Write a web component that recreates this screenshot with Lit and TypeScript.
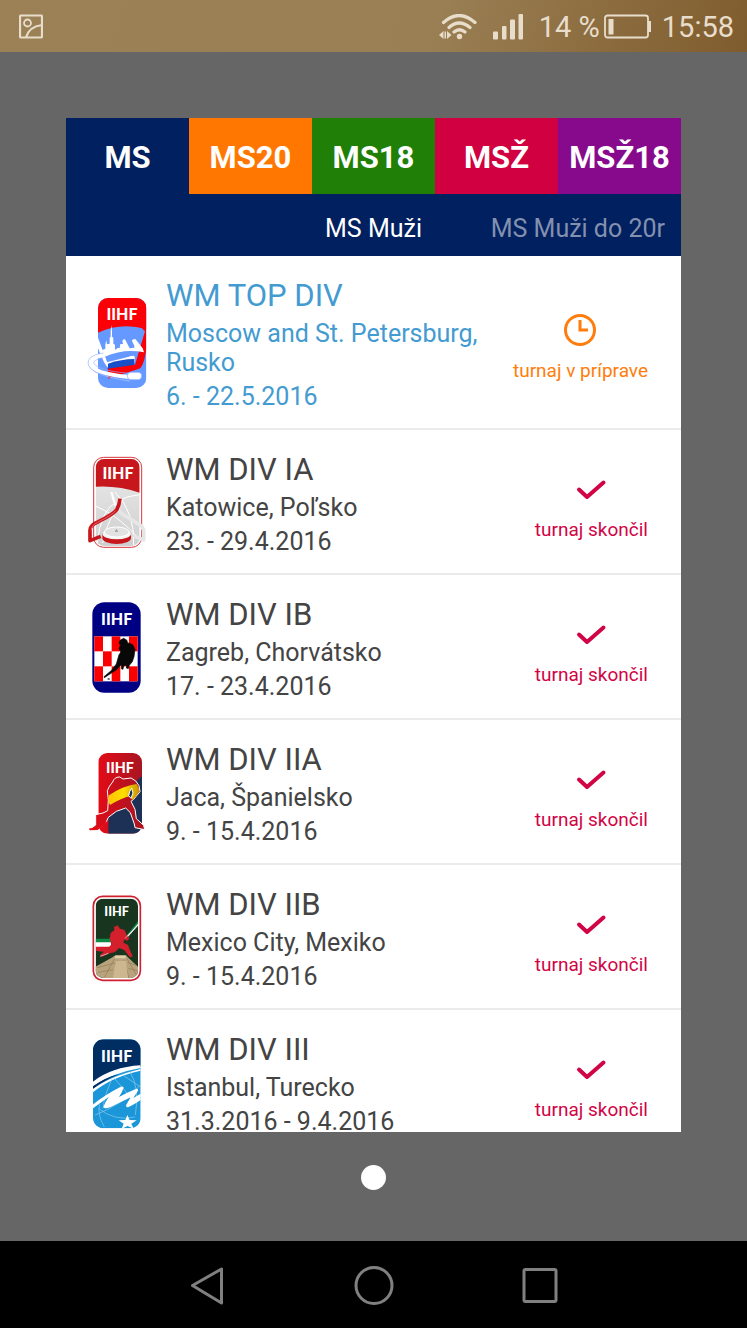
import { LitElement, html, css, svg, TemplateResult } from "lit";
import { customElement, property, state } from "lit/decorators.js";
import { classMap } from "lit/directives/class-map.js";

type Status = "upcoming" | "finished";

interface Tournament {
  name: string;
  place: string;
  dates: string;
  status: Status;
  logo: TemplateResult;
}

const wordmark = (x: number, y: number, size: number) => svg`
  <text x=${x} y=${y} font-size=${size} font-family="Lato, sans-serif" font-weight="900"
    fill="#fff" text-anchor="middle">IIHF</text>`;

const logoTop = html`
  <svg viewBox="0 24 270 300" aria-hidden="true">
    <defs><clipPath id="c"><rect x="69" y="39" width="145" height="270" rx="30" /></clipPath></defs>
    <g clip-path="url(#c)">
      <rect x="69" y="39" width="145" height="270" fill="#6699ff" />
      <path d="M69 39h145v94Q140 110 69 143z" fill="#fb0007" />
      <path d="M214 150V39h-8l-4 92 8 8-30 100-80 32v10l92-30q14-4 22-60z" fill="#fb0007" />
      <path d="M82 195l9-4v-12l3-13 2 12 8-2v-18l3-3v-17l2-18 2 18v17l4 3v18l5 3v16l8-6h6l2-12h8l-2-10q2-6 8-4l14 27 14-2v-6l-7-14q0-6 10-6l22 28 4 12q-60-12-118 13z" fill="#fff" />
      <path d="M69 158l27 72q3 8 12 5l59-21q11-4 12 4l-74 19-4 14Q88 240 69 190z" fill="#fff" />
    </g>
    <path d="M96 232l78-20q6-1 5 8v12l-79 20z" fill="#fff" />
    <path d="M99 236q40-14 79-14v20l-80 13z" fill="#174fc9" />
    <path d="M98 251l82-12q4 12-10 16l-70 17z" fill="#fb0007" />
    <path d="M84 205q-42 6-44 29 4 37 124 54" fill="none" stroke="#8fb3ff" stroke-width="4" />
    <path d="M84 211q-37 6-38 23 5 32 118 42" fill="none" stroke="#fff" stroke-width="12" />
    <path d="M84 219q-29 5-28 16 12 22 104 30" fill="none" stroke="#8fb3ff" stroke-width="2" />
    <rect x="157" y="262" width="43" height="22" rx="11" fill="#fff" stroke="#84adff" stroke-width="2" />
    ${wordmark(141, 106, 48)}
  </svg>`;

const logoIA = html`
  <svg viewBox="0 22 270 300" aria-hidden="true">
    <defs>
      <clipPath id="c"><rect x="62" y="43" width="132" height="261" rx="25" /></clipPath>
      <linearGradient id="g" x1="0" y1="0" x2="0" y2="1">
        <stop offset="0" stop-color="#ececec" /><stop offset="1" stop-color="#cfcfcf" />
      </linearGradient>
    </defs>
    <rect x="56" y="38" width="144" height="270" rx="30" fill="#fff" stroke="#d8373e" stroke-width="3" />
    <g clip-path="url(#c)">
      <rect x="62" y="43" width="132" height="261" fill="url(#g)" />
      <path d="M62 43h132v101Q130 122 62 126z" fill="#c8161d" />
      <path d="M194 150q-80 8-105 60-20 40-22 85M62 184q70 30 132 100M120 142q60 60 56 160M145 165q-50 60-62 130" fill="none" stroke="#fff" stroke-width="3" />
    </g>
    <path d="M109 142q14 50 30 64l48 30q19 10 19 24v26l-32-13" fill="none" stroke="#e6e6e6" stroke-width="11" stroke-linejoin="round" />
    <path d="M109 142q8 28 12 40" fill="none" stroke="#fff" stroke-width="6" />
    <path d="M135 162q-2 20-10 33-8 12-55 36-25 9-25 26v31l32-13" fill="none" stroke="#c8161d" stroke-width="11" stroke-linejoin="round" />
    <path d="M122 198q-10 12-54 35-18 8-20 24" fill="none" stroke="#f08a8e" stroke-width="2" />
    <path d="M82 266v14a43 18 0 0 0 86 0v-14z" fill="#c8161d" />
    <ellipse cx="125" cy="268" rx="43" ry="16" fill="#f4f4f4" />
    <ellipse cx="125" cy="262" rx="37" ry="15" fill="#e2e2e2" stroke="#fff" stroke-width="3" />
    <path d="M119 261l5-8 6 8z" fill="#999" />
    ${wordmark(129, 102, 48)}
  </svg>`;

const squares = [0, 1, 2, 3, 4].flatMap((col) => [0, 1, 2].map((row) => ({ col, row })));

const logoIB = html`
  <svg viewBox="0 21 270 300" aria-hidden="true">
    <rect x="52" y="37" width="145" height="271" rx="36" fill="#000083" />
    <rect x="58" y="139" width="130" height="135" fill="#fff" />
    ${squares.map(({ col, row }) =>
      (col + row) % 2 === 0
        ? svg`<rect x=${58 + col * 26} y=${139 + row * 45} width="26" height="45" fill="#fb0000" />`
        : null
    )}
    <path d="M136 150L146 145L155 150L158 158L173 164L180 178L177 200L172 215L163 226L160 236L154 234L155 224L146 228L144 238L139 236L140 222L126 238L108 250L88 263L87 260L110 241L124 222L132 194L138 186L132 176L136 166L132 158z" fill="#080808" stroke="#080808" stroke-width="2" stroke-linejoin="round" />
    <ellipse cx="101" cy="267" rx="4" ry="2" fill="#333" />
    ${wordmark(125, 105, 48)}
  </svg>`;

const logoIIA = html`
  <svg viewBox="0 6 270 300" aria-hidden="true">
    <defs>
      <clipPath id="c"><rect x="70" y="39" width="131" height="242" rx="27" /></clipPath>
      <linearGradient id="r" x1="0" y1="0" x2="1" y2="0">
        <stop offset="0" stop-color="#e30b17" /><stop offset="1" stop-color="#a71522" />
      </linearGradient>
      <linearGradient id="y" x1="0" y1="0" x2="1" y2="0">
        <stop offset="0" stop-color="#ffc400" /><stop offset=".5" stop-color="#ffdf00" /><stop offset="1" stop-color="#c99400" />
      </linearGradient>
    </defs>
    <g clip-path="url(#c)">
      <rect x="70" y="39" width="131" height="242" fill="url(#r)" />
      <path d="M201 108L100 198v83h101z" fill="#1d3157" />
    </g>
    <path d="M113 126Q118 111 134 111L144 117L168 114Q184 120 192 137L195 155L176 178L168 184L180 208L184 236L206 256L209 269L180 263L178 252L166 218L152 204L124 214L100 232L92 250L66 270L42 269L62 255L62 224L84 219L98 212L100 180L97 152Q102 138 113 126z" fill="url(#r)" stroke="#fff" stroke-width="3" stroke-linejoin="round" />
    <path d="M102 166q40-28 82-34 12 14 7 26-8 12-20 22l-4-12q-28 6-62 27-8-14-3-29z" fill="url(#y)" />
    <path d="M164 155l6-10 4 14-6 16-7-8z" fill="#1d3157" stroke="#fff" stroke-width="3" />
    <path d="M43 268l24-1 33-22" fill="none" stroke="#e30b17" stroke-width="6" stroke-linejoin="round" />
    ${wordmark(135, 98, 43)}
  </svg>`;

const logoIIB = html`
  <svg viewBox="0 6 270 300" aria-hidden="true">
    <defs><clipPath id="c"><rect x="62" y="41" width="127" height="238" rx="22" /></clipPath></defs>
    <rect x="55" y="34" width="141" height="252" rx="28" fill="#fff" stroke="#cf2030" stroke-width="5" />
    <g clip-path="url(#c)">
      <rect x="62" y="41" width="127" height="238" fill="#17351f" />
      <path d="M62 161h46v12H62zM189 108v10l-38 44v-6z" fill="#0f8a45" />
      <path d="M62 172h46v14H62zM189 116v6l-38 42v-4z" fill="#fff" />
      <path d="M62 185h46l-6 14q-20 2-40-2z" fill="#d3202c" />
      <path d="M50 252l60-34 12-8h30l8 8 38 36v34H50z" fill="#b9a37c" />
      <path d="M118 222l-30 55M128 226l-14 54M148 226l14 54M156 220l28 50M66 248l54-14M158 232l28 10M70 262l44-8M160 250l30 8" stroke="#917c59" stroke-width="2" />
      <path d="M123 228h30l6 52h-46z" fill="#cbb891" />
      <path d="M120 213h32v7h-32z" fill="#e0d0aa" />
    </g>
    <path d="M118 126L128 122L134 132L148 136L154 150L162 160L158 166L147 163L144 174L158 180L164 196L172 214L165 216L148 194L132 188L120 200L104 204L78 215L76 210L86 202L83 192L104 186L110 178L105 160L108 144L119 136z" fill="#d3202c" stroke="#d3202c" stroke-width="2" stroke-linejoin="round" />
    <path d="M150 160l39-40M100 205l-24 9" stroke="#e9e0d4" stroke-width="2" />
    ${wordmark(125, 94, 38)}
  </svg>`;

const logoIII = html`
  <svg viewBox="0 21 270 300" aria-hidden="true">
    <defs><clipPath id="c"><rect x="54" y="43" width="143" height="267" rx="32" /></clipPath></defs>
    <g clip-path="url(#c)">
      <rect x="54" y="43" width="143" height="267" fill="#1b96d8" />
      <path d="M54 43h143v81Q110 134 54 170z" fill="#002d62" />
      <path d="M54 170Q110 126 197 121v8Q110 144 54 184z" fill="#fff" />
      <path d="M54 184Q90 158 130 148q-45 20-76 44z" fill="#002d62" />
      <path d="M54 192q50-38 143-60v5q-90 20-143 65z" fill="#fff" />
      <path d="M140 148l57 38M165 140q30 50 16 130M118 160l60 70M60 270q80-30 137-90M74 238q-8 30 14 68M70 250q50 40 110 26M112 160q-24 50-28 90" fill="none" stroke="#8fcbed" stroke-width="2" />
      <path d="M50 242q35-30 86-56 8-4 10 2-4 12-14 28 25-14 52-25 7 0 5 6l-14 22 26-15v18q-26 18-42 25-8 0-5-8l13-22-60 29q-20 8-22 0 6-16 16-30l-51 37z" fill="#fff" />
      <path d="M157 270l7 15 21 1-16 10 7 15-18-8-18 8 6-15-15-10 20-1z" fill="#fff" />
    </g>
    ${wordmark(125, 111, 48)}
  </svg>`;

const TOURNAMENTS: Tournament[] = [
  { name: "WM TOP DIV", place: "Moscow and St. Petersburg, Rusko", dates: "6. - 22.5.2016", status: "upcoming", logo: logoTop },
  { name: "WM DIV IA", place: "Katowice, Poľsko", dates: "23. - 29.4.2016", status: "finished", logo: logoIA },
  { name: "WM DIV IB", place: "Zagreb, Chorvátsko", dates: "17. - 23.4.2016", status: "finished", logo: logoIB },
  { name: "WM DIV IIA", place: "Jaca, Španielsko", dates: "9. - 15.4.2016", status: "finished", logo: logoIIA },
  { name: "WM DIV IIB", place: "Mexico City, Mexiko", dates: "9. - 15.4.2016", status: "finished", logo: logoIIB },
  { name: "WM DIV III", place: "Istanbul, Turecko", dates: "31.3.2016 - 9.4.2016", status: "finished", logo: logoIII },
];

@customElement("tournament-logo")
export class TournamentLogo extends LitElement {
  @property({ attribute: false }) art?: TemplateResult;

  static styles = css`
    :host { display: block; }
    svg { display: block; width: 90px; height: 100px; }
  `;

  render() {
    return this.art;
  }
}

@customElement("tournament-row")
export class TournamentRow extends LitElement {
  @property({ attribute: false }) data!: Tournament;

  static styles = css`
    :host { display: block; }
    .row {
      display: grid;
      grid-template-columns: 91px 1fr auto;
      align-items: center;
      padding: 18px 33px 17px 9px;
      border-bottom: 2px solid #ebebeb;
      color: #444;
    }
    .row.upcoming { color: #439bd1; }
    .info {
      display: flex;
      flex-direction: column;
      gap: 5px;
      padding-top: 4px;
      font-size: 25px;
      line-height: 29px;
    }
    .name { margin: 0; font-size: 31px; line-height: 36px; font-weight: 400; }
    .info p { margin: 0; }
    .status {
      display: flex;
      flex-direction: column;
      align-items: center;
      gap: 12px;
      padding-top: 10px;
      font-size: 19px;
      line-height: 24px;
      color: #d10446;
    }
    .upcoming .status { color: #ff7d0c; }
    .status svg { display: block; width: 34px; height: 34px; }
  `;

  render() {
    const { name, place, dates, status, logo } = this.data;
    const upcoming = status === "upcoming";
    return html`
      <article class=${classMap({ row: true, upcoming })}>
        <tournament-logo .art=${logo}></tournament-logo>
        <div class="info">
          <h2 class="name">${name}</h2>
          <p>${place}</p>
          <p>${dates}</p>
        </div>
        <div class="status">
          <svg viewBox="0 0 34 34" fill="none" stroke="currentColor" stroke-width="3" aria-hidden="true">
            ${upcoming
              ? svg`<circle cx="17" cy="17" r="14.500" /><path d="M17 7v10h8" />`
              : svg`<path d="M5 17.500l8 7.500L29.500 10.500" stroke-width="4" stroke-linecap="round" stroke-linejoin="round" />`}
          </svg>
          <span>${upcoming ? "turnaj v príprave" : "turnaj skončil"}</span>
        </div>
      </article>`;
  }
}

@customElement("app-root")
export class AppRoot extends LitElement {
  @state() private tab = "MS";

  static styles = css`
    :host {
      display: flex;
      flex-direction: column;
      height: 100vh;
      font-family: Roboto, "Noto Sans", sans-serif;
      background: #666;
    }
    svg { display: block; }
    button { border: 0; padding: 0; margin: 0; background: none; font: inherit; color: inherit; cursor: pointer; }
    .status-bar {
      display: flex;
      align-items: center;
      height: 52px;
      box-sizing: border-box;
      padding: 2px 13px 0 19px;
      color: #e8ddcb;
      font-size: 29px;
      line-height: 34px;
      background: linear-gradient(110deg, #9c8157 0%, #9a7f54 58%, #7f5c2d 100%);
    }
    .photo { margin-right: auto; }
    .signal { margin: 0 16px; }
    .clock { margin-left: 10px; }
    .battery { margin-left: 4px; }
    .stage {
      flex: 1;
      min-height: 0;
      display: flex;
      flex-direction: column;
      padding: 66px 66px 0;
    }
    .card {
      flex: 1;
      min-height: 0;
      display: flex;
      flex-direction: column;
      background: #fff;
      overflow: hidden;
    }
    .head { background: #00205f; color: #fff; }
    .tabs { display: grid; grid-template-columns: repeat(5, 1fr); }
    .tab { height: 76px; padding-top: 4px; font-size: 31px; line-height: 36px; font-weight: 700; }
    .navy { background: #00205f; }
    .orange { background: #ff7700; }
    .green { background: #1f7f06; }
    .red { background: #d10040; }
    .purple { background: #860a8b; }
    .pager {
      display: grid;
      grid-template-columns: 1fr auto 1fr;
      padding: 20px 16px 12px;
      font-size: 25px;
      line-height: 30px;
    }
    .current { grid-column: 2; }
    .next { justify-self: end; color: #8490af; }
    .list { flex: 1; min-height: 0; overflow: hidden; }
    .dots { display: flex; justify-content: center; padding: 33px 0 51px; }
    .dot { width: 25px; height: 25px; border-radius: 50%; background: #fff; }
    .nav {
      display: flex;
      justify-content: center;
      gap: 126px;
      padding: 24px 0 23px;
      background: #000;
      color: #808080;
    }
  `;

  private tabs = [
    { label: "MS", tone: "navy" },
    { label: "MS20", tone: "orange" },
    { label: "MS18", tone: "green" },
    { label: "MSŽ", tone: "red" },
    { label: "MSŽ18", tone: "purple" },
  ];

  render() {
    return html`
      <header class="status-bar">
        <svg class="photo" width="24" height="26" viewBox="0 0 24 26" fill="none" stroke="currentColor" aria-hidden="true">
          <rect x="1" y="1.500" width="22" height="22" rx="1" stroke-width="2.200" />
          <circle cx="8.500" cy="9" r="3.500" stroke-width="1.800" />
          <path d="M7 23.500Q10 12.500 23 11" stroke-width="2.200" />
        </svg>
        <svg width="38" height="27" viewBox="0 0 38 27" fill="none" stroke="currentColor" stroke-width="3.200" stroke-linecap="round" aria-hidden="true">
          <path d="M4.500 8.500Q20 -5.500 36 8.500M10 13.500Q20 4.500 31 13.500M15 18Q20.500 13.500 26 18" />
          <circle cx="20.500" cy="22.500" r="2.700" fill="currentColor" stroke="none" />
          <path d="M4.500 17v8l-4.500-4zM5.500 17.500h1.500v7h-1.500zM8 17v8l4.500-4z" fill="currentColor" stroke="none" />
        </svg>
        <svg class="signal" width="30" height="27" viewBox="0 0 30 27" fill="currentColor" aria-hidden="true">
          <rect x="0" y="17.500" width="5" height="8" rx="1" /><rect x="9" y="12" width="4.500" height="13.500" rx="1" />
          <rect x="17" y="5.500" width="5" height="20" rx="1" /><rect x="25.500" y="0" width="4.500" height="25.500" rx="1" />
        </svg>
        <span>14 %</span>
        <svg class="battery" width="48" height="26" viewBox="0 0 48 26" fill="none" stroke="currentColor" stroke-width="1.800" aria-hidden="true">
          <rect x="1" y="1.500" width="43" height="22" rx="2.500" />
          <rect x="4.500" y="5" width="5" height="15.500" fill="currentColor" stroke="none" />
          <path d="M45.500 7v11" stroke-width="3" />
        </svg>
        <span class="clock">15:58</span>
      </header>
      <main class="stage">
        <section class="card">
          <div class="head">
            <div class="tabs" role="tablist">
              ${this.tabs.map(
                (t) => html`<button
                  role="tab"
                  class="tab ${t.tone}"
                  aria-selected=${this.tab === t.label ? "true" : "false"}
                  @click=${() => (this.tab = t.label)}
                >${t.label}</button>`
              )}
            </div>
            <div class="pager">
              <button class="current">MS Muži</button>
              <button class="next">MS Muži do 20r</button>
            </div>
          </div>
          <div class="list">
            ${TOURNAMENTS.map((t) => html`<tournament-row .data=${t}></tournament-row>`)}
          </div>
        </section>
        <div class="dots"><span class="dot"></span></div>
      </main>
      <nav class="nav">
        <button aria-label="Späť">
          <svg width="40" height="40" viewBox="0 0 40 40" fill="none" stroke="currentColor" stroke-width="3" stroke-linejoin="round"><path d="M4.500 20.500L33.500 4v34z" /></svg>
        </button>
        <button aria-label="Domov">
          <svg width="40" height="40" viewBox="0 0 40 40" fill="none" stroke="currentColor" stroke-width="3"><circle cx="20" cy="20.500" r="18" /></svg>
        </button>
        <button aria-label="Prehľad">
          <svg width="40" height="40" viewBox="0 0 40 40" fill="none" stroke="currentColor" stroke-width="3"><rect x="4" y="4.500" width="32" height="32" rx="1.500" /></svg>
        </button>
      </nav>`;
  }
}
